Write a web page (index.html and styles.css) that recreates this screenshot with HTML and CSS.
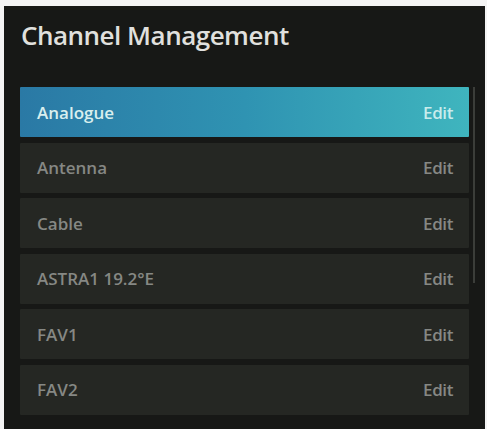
FILE: index.html
```html
<!DOCTYPE html>
<html>
<head>
<meta charset="utf-8">
<link rel="stylesheet" href="styles.css">
</head>
<body>
<div class="frame">
  <div class="panel">
    <h1 class="title">Channel Management</h1>
    <div class="body">
      <ul class="list">
        <li class="row active"><span class="name">Analogue</span><span class="edit">Edit</span></li>
        <li class="row"><span class="name">Antenna</span><span class="edit">Edit</span></li>
        <li class="row"><span class="name">Cable</span><span class="edit">Edit</span></li>
        <li class="row"><span class="name">ASTRA1 19.2°E</span><span class="edit">Edit</span></li>
        <li class="row"><span class="name">FAV1</span><span class="edit">Edit</span></li>
        <li class="row"><span class="name">FAV2</span><span class="edit">Edit</span></li>
      </ul>
      <div class="scroll"><div class="thumb"></div></div>
    </div>
  </div>
</div>
</body>
</html>
```

FILE: styles.css
```css
html, body {
  margin: 0;
  padding: 0;
  background: #f4f4f4;
}
body {
  width: 487px;
  height: 429px;
  overflow: hidden;
  font-family: "Open Sans", "Noto Sans", sans-serif;
}
.frame {
  padding: 6px 2px 0 4px;
  height: 429px;
  box-sizing: border-box;
}
.panel {
  background: #171816;
  height: 100%;
  box-sizing: border-box;
  padding: 11px 0 0 16px;
}
.title {
  margin: 0;
  font-size: 26px;
  font-weight: 600;
  color: #e0e0de;
  line-height: 36px;
  letter-spacing: -0.5px;
  padding-left: 1px;
}
.body {
  display: flex;
  margin-top: 34px;
}
.list {
  list-style: none;
  margin: 0;
  padding: 0;
  width: 449px;
  display: flex;
  flex-direction: column;
  gap: 5.5px;
}
.row {
  height: 50px;
  background: #252723;
  display: flex;
  align-items: center;
  justify-content: space-between;
  padding: 0 16px 0 17px;
  font-size: 17px;
  font-weight: 600;
  letter-spacing: 0;
  color: #868884;
  border-radius: 1px;
}
.row.active {
  background: linear-gradient(90deg, #2a79a5 0%, #2f93b2 50%, #3fb5be 100%);
  color: #d9efee;
}
.row.active .edit {
  color: #c9ecec;
}
.edit {
  color: #868884;
  letter-spacing: -0.4px;
}
.scroll {
  margin-left: 4px;
  width: 2px;
}
.thumb {
  width: 2px;
  height: 196px;
  background: #3b3d39;
}
```
